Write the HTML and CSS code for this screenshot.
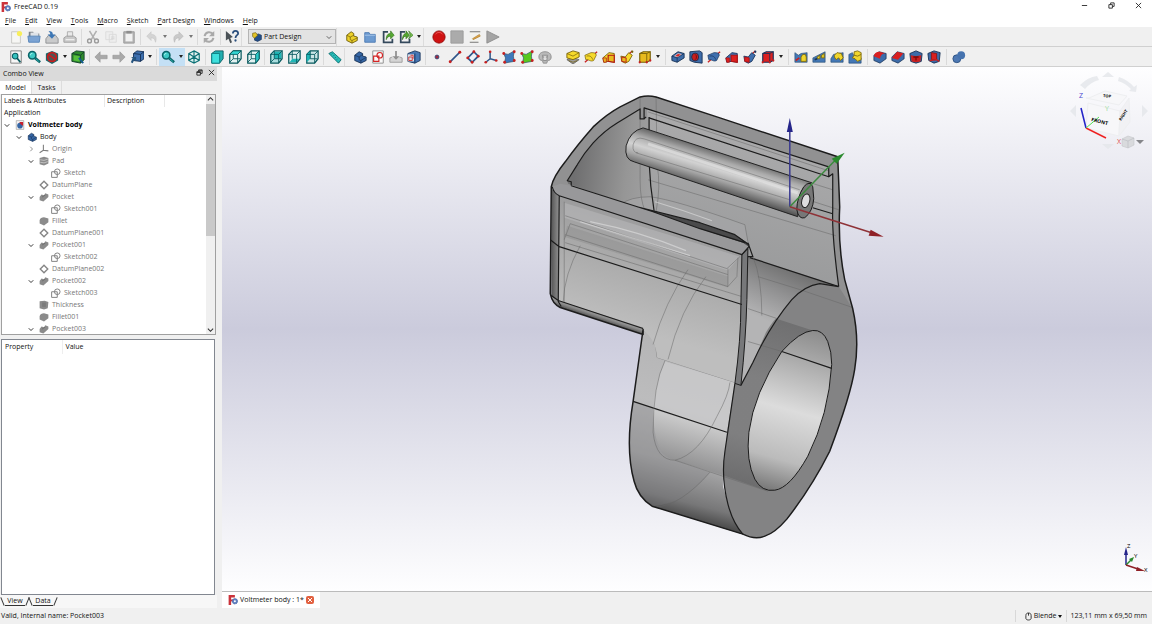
FILE: index.html
```html
<!DOCTYPE html>
<html lang="en">
<head>
  <meta charset="UTF-8" />
  <meta name="viewport" content="width=device-width, initial-scale=1.0"/>
  <title>FreeCAD 0.19</title>
  <link rel="stylesheet" href="styles.css">
</head>
<body>
  <!-- icon set -->
  <svg class="sprite" aria-hidden="true">
    <symbol id="logo" viewBox="0 0 16 16"><path d="M1 0h10v4H5v3h4v3H5v6H1z" fill="#cb333b"/><circle cx="11" cy="10" r="4.4" fill="#5f7fc0" stroke="#3a5696" stroke-dasharray="2 1"/><circle cx="11" cy="10" r="1.6" fill="#fff"/></symbol>
    <symbol id="new" viewBox="0 0 16 16"><path d="M3 2h8l2 3v10H3z" fill="#f6f6f4" stroke="#c4c4c0"/><circle cx="12" cy="4" r="3" fill="#f8ee5a"/></symbol>
    <symbol id="open" viewBox="0 0 16 16"><path d="M2 2h5l1 2h6v9H2z" fill="#7d8288"/><path d="M4 3h9v5H4z" fill="#dfe3e8"/><path d="M1 7h14l-1 7H2z" fill="#7ba3d3" stroke="#5583b8"/></symbol>
    <symbol id="save" viewBox="0 0 16 16"><path d="M1 10l3-4h8l3 4v5H1z" fill="#c9cacb" stroke="#8d8f91"/><path d="M4 1c3 0 5 1 5 4h3l-4 5-5-5h3c0-2-1-3-2-4z" fill="#3d77b5"/></symbol>
    <symbol id="print" viewBox="0 0 16 16"><path d="M5 2h6v6H5z" fill="#e9e9e9" stroke="#aaa"/><path d="M1 9l3-2h8l3 2v5H1z" fill="#c9c9c9" stroke="#9b9b9b"/><path d="M3 11h10" stroke="#eee" stroke-width="1.5"/></symbol>
    <symbol id="cut" viewBox="0 0 16 16"><path d="M4 1l6 10M12 1L6 11" stroke="#b0b0b0" stroke-width="1.8"/><g fill="none" stroke="#9b9b9b" stroke-width="1.6"><circle cx="4" cy="12.500" r="2.200"/><circle cx="12" cy="12.500" r="2.200"/></g></symbol>
    <symbol id="copy" viewBox="0 0 16 16"><path d="M2 2h8v9H2zM6 5h8v9H6z" fill="#eee" stroke="#dadada"/><path d="M8 8h4M8 10h4" stroke="#d3d3d3"/></symbol>
    <symbol id="paste" viewBox="0 0 16 16"><path d="M2 2h12v13H2z" fill="#b3b3b3" stroke="#999"/><path d="M4 4h8v9H4z" fill="#f1f1f1"/><path d="M5 1h6v3H5z" fill="#8e8e8e"/></symbol>
    <symbol id="undo" viewBox="0 0 16 16"><path d="M2 7l5-5v3c5 0 7 3 5 9-1-4-2-5-5-5v3z" fill="#d4d4d4" stroke="#c4c4c4" stroke-width=".6"/></symbol>
    <symbol id="redo" viewBox="0 0 16 16"><path d="M14 7L9 2v3C4 5 2 8 4 14c1-4 2-5 5-5v3z" fill="#c9c9c9" stroke="#b5b5b5" stroke-width=".6"/></symbol>
    <symbol id="refresh" viewBox="0 0 16 16"><path d="M3 7c1-5 7-6 10-2M13 9c-1 5-7 6-10 2" fill="none" stroke="#a9a9a9" stroke-width="2.4"/><path d="M14 1v6H8zM2 15V9h6z" fill="#a9a9a9"/></symbol>
    <symbol id="whats" viewBox="0 0 16 16"><path d="M1 1l8 7-3 1 2 5-2 1-2-5-3 2z" fill="#4b5257"/><path d="M9 4c0-4 6-4 6 0 0 2-3 2-3 5" fill="none" stroke="#2b4f7d" stroke-width="2"/><circle cx="12" cy="12" r="1.3" fill="#2b4f7d"/></symbol>
    <symbol id="wb" viewBox="0 0 16 16"><path d="M4 6l6-3 5 2v7l-6 3-5-2z" fill="#24508c" stroke="#152f52"/><path d="M1 2l5-1 3 4-5 5-3-3z" fill="#e3c52b" stroke="#6b5a08"/></symbol>
    <symbol id="part" viewBox="0 0 16 16"><path d="M2 6l5-4 3 2v3l4 1v4l-6 3-6-3z" fill="#edd12a" stroke="#6b5a08"/><path d="M2 6l4 2v3l2 1v3M6 8l4-2M8 12l6-3" fill="none" stroke="#6b5a08" stroke-width=".8"/></symbol>
    <symbol id="group" viewBox="0 0 16 16"><path d="M2 3h5l1 2h6v9H2z" fill="#6d9bd1" stroke="#4a78b0"/><path d="M2 6h12" stroke="#a9c8ea"/></symbol>
    <symbol id="link" viewBox="0 0 16 16"><path d="M8 2H3v12h10v-4" fill="none" stroke="#34495c" stroke-width="2"/><path d="M6 11c0-5 2-7 5-7V1l4 5-4 4V7c-2 0-4 1-5 4z" fill="#55a832" stroke="#2d6e16" stroke-width=".7"/></symbol>
    <symbol id="links" viewBox="0 0 16 16"><path d="M7 2H2v12h10v-4" fill="none" stroke="#34495c" stroke-width="2"/><path d="M4 11c0-5 2-7 4-7V1l4 5-4 4V7c-2 0-3 1-4 4z" fill="#55a832" stroke="#2d6e16" stroke-width=".7"/><path d="M11 1l5 5-5 4 2-4z" fill="#7cc452" stroke="#2d6e16" stroke-width=".7"/></symbol>
    <symbol id="rec" viewBox="0 0 16 16"><circle cx="8" cy="8" r="7" fill="#cf1212" stroke="#930b0b"/><path d="M4 5c2-3 6-3 8 0" stroke="#ec5c5c" fill="none"/></symbol>
    <symbol id="stop" viewBox="0 0 16 16"><path d="M1 1h14v14H1z" fill="#ababab" stroke="#9a9a9a"/></symbol>
    <symbol id="macro" viewBox="0 0 16 16"><path d="M2 2h12v12H2z" fill="#f2f2ee"/><path d="M2 2h12M2 14h10" stroke="#777" stroke-width="1.4"/><path d="M5 10l8-5 1 2-8 4z" fill="#dfa445" stroke="#9b6d1f" stroke-width=".6"/></symbol>
    <symbol id="play" viewBox="0 0 16 16"><path d="M1 1l14 7-14 7z" fill="#a5a5a5" stroke="#8d8d8d"/></symbol>

    <symbol id="fit" viewBox="0 0 16 16"><path d="M2 1h12v14H2z" fill="#f7f7f7" stroke="#777"/><circle cx="7" cy="7" r="3.200" fill="#35c1bd" stroke="#0b5d62" stroke-width="1.2"/><path d="M9 9l4 5" stroke="#0b5d62" stroke-width="2"/></symbol>
    <symbol id="mag" viewBox="0 0 16 16"><circle cx="6" cy="6" r="4.200" fill="#3ec9c4" stroke="#0b6468" stroke-width="1.8"/><path d="M4 6c0-2 1-2 2-2" stroke="#c3fbf6" fill="none"/><path d="M9 9l6 5" stroke="#0b6468" stroke-width="3"/><path d="M10 10l4 3.500" stroke="#2cb3b0"/></symbol>
    <symbol id="nosign" viewBox="0 0 16 16"><path d="M1 4l7-3 7 3v8l-7 4-7-4z" fill="#18686b"/><circle cx="8" cy="8" r="5" fill="#4b5556" stroke="#c41f1f" stroke-width="2"/><path d="M4 5l8 6" stroke="#c41f1f" stroke-width="2"/></symbol>
    <symbol id="bbox" viewBox="0 0 16 16"><path d="M1 4l5-3 9 1v9l-4 4-10-2z" fill="#2e8b2d" stroke="#123f2a"/><path d="M3 6l7 1v6l-7-1z" fill="#56bf3d"/><path d="M1 4l10 2 4-4M11 6v9" stroke="#123f2a" fill="none"/><path d="M9 9l5 6" stroke="#155d92" stroke-width="2"/></symbol>
    <symbol id="prev" viewBox="0 0 16 16"><path d="M1 8l6-6v4h8v4H7v4z" fill="#a9a9a9" stroke="#949494" stroke-width=".7"/></symbol>
    <symbol id="next" viewBox="0 0 16 16"><path d="M15 8L9 2v4H1v4h8v4z" fill="#a9a9a9" stroke="#949494" stroke-width=".7"/></symbol>
    <symbol id="goto" viewBox="0 0 16 16"><path d="M4 4l4-3 8 1v8l-4 3-8-1z" fill="#3d6fae" stroke="#142e52"/><path d="M4 4l8 1 4-3M12 5v8" fill="none" stroke="#142e52"/><path d="M1 14l2-5-2-1h6v5l-2-2-2 4z" fill="#25547e"/></symbol>
    <symbol id="iso" viewBox="0 0 16 16"><path d="M8 1l6 3v8l-6 3-6-3V4zM8 1v14M2 4l6 4 6-4M2 12l6-4 6 4" fill="#d9f2f1" stroke="#0c7075" stroke-width="1.3"/></symbol>
    <symbol id="vfront" viewBox="0 0 16 16"><path d="M2 4l4-3h9v9l-4 5H2z" fill="#21aeb0" stroke="#07595e"/><path d="M2 4h9v11H2z" fill="#3ee0dd" stroke="#0b7d80"/></symbol>
    <symbol id="vtop" viewBox="0 0 16 16"><path d="M2 5l4-4h9v9l-4 5H2z" fill="#e3f2f2" stroke="#07595e" stroke-width="1.4"/><path d="M2 5l4-4h9l-4 4z" fill="#35d8d6" stroke="#07595e"/><path d="M11 5v10M6 5v5l-4 4M6 10h8" stroke="#07595e" fill="none"/></symbol>
    <symbol id="vright" viewBox="0 0 16 16"><path d="M2 5l4-4h9v9l-4 5H2z" fill="#e3f2f2" stroke="#07595e" stroke-width="1.4"/><path d="M11 5l4-4v9l-4 5z" fill="#2cc7c6" stroke="#07595e"/><path d="M2 5h9M6 1v9l-4 4M6 10h5" stroke="#07595e" fill="none"/></symbol>
    <symbol id="vrear" viewBox="0 0 16 16"><path d="M2 5l4-4h9v9l-4 5H2z" fill="#aadedf" stroke="#07595e" stroke-width="1.4"/><path d="M6 2h8v8H6z" fill="#1fb6b6"/><path d="M2 5h9v10M11 5l4-4M6 1v9l-4 4M6 10h8" stroke="#07595e" fill="none"/></symbol>
    <symbol id="vbottom" viewBox="0 0 16 16"><path d="M2 5l4-4h9v9l-4 5H2z" fill="#e0eff0" stroke="#07595e" stroke-width="1.4"/><path d="M3 14l3-4h8l-3 4z" fill="#1fb6b6"/><path d="M2 5h9v10M11 5l4-4M6 1v9" stroke="#07595e" fill="none"/></symbol>
    <symbol id="vleft" viewBox="0 0 16 16"><path d="M2 5l4-4h9v9l-4 5H2z" fill="#cbe6e7" stroke="#07595e" stroke-width="1.4"/><path d="M2 5l4-4v9l-4 4z" fill="#1fb6b6"/><path d="M2 5h9v10M11 5l4-4M6 1v9h8" stroke="#07595e" fill="none"/></symbol>
    <symbol id="measure" viewBox="0 0 16 16"><path d="M1 4l4-2 10 9-3 4z" fill="#29bdb9" stroke="#0a6b6e"/><path d="M4 5l1-1M6 7l1-1M8 9l1-1M10 11l1-1" stroke="#0a6b6e"/></symbol>

    <symbol id="body" viewBox="0 0 16 16"><path d="M2 6l5-4 4 2v3l4 1v4l-6 3-7-3z" fill="#3566a5" stroke="#152f52"/><path d="M2 6l5 2v3l2 1v3M7 8l4-3M9 12l5-3" fill="none" stroke="#152f52" stroke-width=".8"/></symbol>
    <symbol id="sketchnew" viewBox="0 0 16 16"><path d="M2 1h12v14H2z" fill="#fafafa" stroke="#888"/><g fill="none" stroke="#d42525" stroke-width="1.3"><path d="M3 7h6v6H3z"/><circle cx="10" cy="6" r="3.200"/></g></symbol>
    <symbol id="import" viewBox="0 0 16 16"><path d="M1 9v5h14V9l-3-1M4 8L1 9" fill="#d5d5d5" stroke="#9a9a9a"/><path d="M7 1h2v6h3l-4 4-4-4h3z" fill="#8f8f8f"/></symbol>
    <symbol id="map" viewBox="0 0 16 16"><path d="M1 4l8-3 6 2v9l-6 3-8-2z" fill="#4677b4" stroke="#17345b"/><path d="M9 4v11" stroke="#17345b"/><path d="M1 5h7v8H1z" fill="#d8dde4"/><path d="M2 8h4v4H2zM4 6h3v4" fill="none" stroke="#d03030"/></symbol>
    <symbol id="point" viewBox="0 0 16 16"><circle cx="8" cy="8" r="2.200" fill="#a22a3f" stroke="#2b4c7c"/></symbol>
    <symbol id="line" viewBox="0 0 16 16"><path d="M3 13L13 3" stroke="#2f5589" stroke-width="1.8"/><circle cx="2.500" cy="13.500" r="1.700" fill="#c72121"/><circle cx="13.500" cy="2.500" r="1.700" fill="#c72121"/></symbol>
    <symbol id="plane" viewBox="0 0 16 16"><path d="M9 2l5 5-7 7-5-5z" fill="#eef2f7" stroke="#2f5589" stroke-width="2"/><g fill="#c72121"><circle cx="9" cy="2" r="1.600"/><circle cx="14" cy="7" r="1.600"/><circle cx="7" cy="14" r="1.600"/><circle cx="2" cy="9" r="1.600"/></g></symbol>
    <symbol id="csys" viewBox="0 0 16 16"><path d="M7 2v8l7 2M7 10l-5 4" fill="none" stroke="#2f5589" stroke-width="1.7"/><g fill="#c72121"><circle cx="7" cy="2" r="1.500"/><circle cx="14" cy="12" r="1.500"/><circle cx="2" cy="14" r="1.500"/></g></symbol>
    <symbol id="binder" viewBox="0 0 16 16"><path d="M2 4l5 1 7-4-1 6 1 6-6 1-5 1 1-6z" fill="currentColor" stroke="#31516b" stroke-width=".8"/><g fill="#c72121"><circle cx="2" cy="4" r="1.600"/><circle cx="14" cy="2" r="1.600"/><circle cx="14" cy="12" r="1.600"/><circle cx="3" cy="14" r="1.600"/></g></symbol>
    <symbol id="clone" viewBox="0 0 16 16"><path d="M1 8c0-4 3-6 7-6s7 2 7 6-3 4-4 4l-1 3H6l-1-3c-2 0-4-1-4-4z" fill="#b9b9b9" stroke="#8c8c8c"/><path d="M5 6h6l-1 6H6z" fill="#dedede" stroke="#888"/><path d="M6 8h1M9 8h1" stroke="#555"/></symbol>

    <symbol id="pad" viewBox="0 0 16 16"><path d="M1 11l7-2 7 2-7 5z" fill="#9d9d9d" stroke="#666"/><path d="M1 4l7-3 7 2v5l-7 3-7-2z" fill="var(--hi)" stroke="var(--edge)"/><path d="M1 4l7 3 7-4M3 12l5 2 5-2" fill="none" stroke="var(--edge)" stroke-width=".8"/></symbol>
    <symbol id="revolve" viewBox="0 0 16 16"><path d="M1 14L15 2" stroke="#c72121" stroke-width="1.5"/><path d="M1 6l7-3c3 0 6 0 6 3l-3 6c-4 2-6-2-9-1z" fill="var(--hi)" stroke="var(--edge)" stroke-width=".8"/><path d="M3 7c4-1 6 1 7 4" fill="none" stroke="var(--edge)" stroke-width=".8"/></symbol>
    <symbol id="loft" viewBox="0 0 16 16"><path d="M1 9l7-6 6 1v10l-7-1-5 1z" fill="var(--hi)" stroke="var(--edge)"/><path d="M7 6l7 0v8l-7-1z" fill="var(--lo)" stroke="#b31313" stroke-width="1.300"/><path d="M1 9h4v5H2z" fill="var(--lo)" stroke="#b31313" stroke-width=".8"/></symbol>
    <symbol id="pipe" viewBox="0 0 16 16"><path d="M9 6l5-5" stroke="#c72121" stroke-width="1.500"/><path d="M1 7l5 1 4-5 4 3-4 7-4 2-4-2z" fill="var(--hi)" stroke="var(--edge)"/><path d="M2 8l5 1v5l-5-1z" fill="var(--lo)" stroke="#b31313"/><circle cx="14" cy="2" r="1.300" fill="var(--edge)"/></symbol>
    <symbol id="prim" viewBox="0 0 16 16"><path d="M2 4l4-2h8v10l-4 2H2z" fill="var(--lo)" stroke="var(--edge)" stroke-width="1.300"/><path d="M2 4h8v10M10 4l4-2" stroke="var(--edge)" fill="none"/><g fill="#c72121"><circle cx="2" cy="14" r="1.300"/><circle cx="10" cy="14" r="1.300"/><circle cx="14" cy="12" r="1.300"/></g></symbol>
    <symbol id="pocket" viewBox="0 0 16 16"><path d="M1 7l7-5 7 2v5l-8 5-6-2z" fill="#3d6ca9" stroke="#152f52"/><path d="M4 7l4-3 4 1-4 3z" fill="#d12626" stroke="#efefef" stroke-width=".7"/><path d="M1 7l6 2 8-5M7 9v5" fill="none" stroke="#152f52" stroke-width=".8"/></symbol>
    <symbol id="hole" viewBox="0 0 16 16"><path d="M1 2l11-1 3 2v12l-9-1-5-2z" fill="#3d6ca9" stroke="#152f52"/><ellipse cx="7" cy="8" rx="4" ry="4.500" fill="#c91e1e" stroke="#152f52"/><path d="M7 5c2 1 2 5 0 6" fill="none" stroke="#6d0c0c"/></symbol>
    <symbol id="mirror" viewBox="0 0 16 16"><path d="M1 3l4 3 3-2 7-1v11H1z" fill="#4478b6" stroke="#24486f" stroke-width=".7"/><path d="M8 8l2-3h3l1 3v5H8z" fill="#f0d52d" stroke="#7d690d"/><path d="M2 12l4-3" stroke="#c72121" stroke-width="2"/></symbol>
    <symbol id="linear" viewBox="0 0 16 16"><path d="M1 9l6-3 8-4v12H1z" fill="#4478b6" stroke="#24486f" stroke-width=".7"/><path d="M6 8l3-2v4H6zM11 6l3-2v5h-3z" fill="#f0d52d" stroke="#7d690d"/><path d="M3 11l3-1" stroke="#1c3552" stroke-width="2"/></symbol>
    <symbol id="polar" viewBox="0 0 16 16"><path d="M1 10l3-5 11-2v11H1z" fill="#4478b6" stroke="#24486f" stroke-width=".7"/><path d="M5 6l3-3 5 1 2 5-3 3-2-3-3 2-2-3z" fill="#f0d52d" stroke="#7d690d"/></symbol>
    <symbol id="multi" viewBox="0 0 16 16"><path d="M1 5l4-2 3 6h7v6H1z" fill="#4478b6" stroke="#24486f" stroke-width=".7"/><path d="M7 2l4-1 4 2v8l-4 2-3-3-3-1 2-3z" fill="#f0d52d" stroke="#7d690d"/><path d="M7 6l4 1 4-2" fill="none" stroke="#7d690d"/></symbol>
    <symbol id="fillet" viewBox="0 0 16 16"><path d="M1 6l6-4 8 2v6l-7 5-7-3z" fill="#3d6ca9" stroke="#152f52" stroke-width=".8"/><path d="M1 7c1-4 3-5 7-5l6 2c-3 0-5 1-6 6z" fill="#d91f1f"/></symbol>
    <symbol id="chamfer" viewBox="0 0 16 16"><path d="M1 8l6-6 8 2v6l-7 5-7-3z" fill="#3d6ca9" stroke="#152f52" stroke-width=".8"/><path d="M1 9l6-7 7 2-6 7z" fill="#d91f1f"/></symbol>
    <symbol id="draft" viewBox="0 0 16 16"><path d="M1 4l7-3 7 3-1 9-6 2-6-2z" fill="#3d6ca9" stroke="#152f52"/><path d="M2 6l6 1 6-1-1 7-5 1-5-1z" fill="#c92020"/><path d="M5 8h6M8 8v4" stroke="#7a0b0b" stroke-width="1.500"/></symbol>
    <symbol id="thick" viewBox="0 0 16 16"><path d="M1 4l7-3 7 2-1 10-6 2-6-3z" fill="#3d6ca9" stroke="#152f52"/><path d="M5 3l6 1v7H5z" fill="#d91f1f" stroke="#8f1212"/><path d="M3 12l8-1 3 2" fill="none" stroke="#c92020" stroke-width="1.500"/></symbol>
    <symbol id="bool" viewBox="0 0 16 16"><circle cx="5.500" cy="10" r="4.500" fill="#4d78b3" stroke="#2b5080"/><circle cx="10.500" cy="6" r="4.500" fill="#4673af"/></symbol>

    <symbol id="doc" viewBox="0 0 16 16"><path d="M2 1h12v14H2z" fill="#f4f4f4" stroke="#999"/><circle cx="8" cy="9" r="4.500" fill="#3566a5"/><path d="M7 3h6v6c-2-1-5-2-6-6z" fill="#c9202f"/></symbol>
    <symbol id="t-origin" viewBox="0 0 16 16"><path d="M7 1v9l8 1M7 10l-6 4" fill="none" stroke="#7d7d7d" stroke-width="1.700"/></symbol>
    <symbol id="t-pad" viewBox="0 0 16 16"><path d="M1 3l7-2 7 2v9l-7 3-7-2z" fill="#8b8b8b"/><path d="M2 6l6 1 6-2M2 10l6 1 6-2" fill="none" stroke="#e1e1e1"/></symbol>
    <symbol id="t-sketch" viewBox="0 0 16 16"><g fill="none" stroke="#848484" stroke-width="1.600"><path d="M1 6h9v9H1z"/><circle cx="10" cy="6" r="4.500"/></g></symbol>
    <symbol id="t-plane" viewBox="0 0 16 16"><path d="M8 2l6 6-6 6-6-6z" fill="none" stroke="#858585" stroke-width="2.200"/></symbol>
    <symbol id="t-pocket" viewBox="0 0 16 16"><path d="M1 8l3-4 4 1 2-3 5 2v4l-8 7-6-2z" fill="#8b8b8b"/><path d="M5 8l5-3" stroke="#6c6c6c" stroke-width="1.500"/></symbol>
    <symbol id="t-fillet" viewBox="0 0 16 16"><path d="M1 7c0-3 4-5 7-5l7 2v6l-7 5-7-3z" fill="#8b8b8b"/></symbol>
    <symbol id="t-thick" viewBox="0 0 16 16"><path d="M1 2l8-1 6 2-1 10-6 2-7-2z" fill="#8b8b8b"/><path d="M5 4h6v7H5z" fill="#7c7c7c"/></symbol>
    <symbol id="chev" viewBox="0 0 8 8"><path d="M1 3l3 3 3-3" fill="none" stroke="currentColor" stroke-width="1.200"/></symbol>
  </svg>

  <div class="app">
    <header class="titlebar">
      <svg class="logo"><use href="#logo"/></svg>
      <h1>FreeCAD 0.19</h1>
      <div class="winbtns">
        <button aria-label="Minimize"><svg viewBox="0 0 8 8"><path d="M1 4h6"/></svg></button>
        <button aria-label="Restore"><svg viewBox="0 0 8 8"><path d="M1 3h4v4H1zM3 3V1h4v4H5"/></svg></button>
        <button aria-label="Close"><svg viewBox="0 0 8 8"><path d="M1 1l6 6M7 1L1 7"/></svg></button>
      </div>
    </header>

    <nav class="menubar">
      <button><u>F</u>ile</button>
      <button><u>E</u>dit</button>
      <button><u>V</u>iew</button>
      <button><u>T</u>ools</button>
      <button><u>M</u>acro</button>
      <button><u>S</u>ketch</button>
      <button><u>P</u>art Design</button>
      <button><u>W</u>indows</button>
      <button><u>H</u>elp</button>
    </nav>

    <div class="toolbar">
      <span class="grip"></span>
      <button aria-label="New"><svg><use href="#new"/></svg></button>
      <button aria-label="Open"><svg><use href="#open"/></svg></button>
      <button aria-label="Save"><svg><use href="#save"/></svg></button>
      <button aria-label="Print"><svg><use href="#print"/></svg></button>
      <span class="sep"></span>
      <button aria-label="Cut"><svg><use href="#cut"/></svg></button>
      <button aria-label="Copy"><svg><use href="#copy"/></svg></button>
      <button aria-label="Paste"><svg><use href="#paste"/></svg></button>
      <span class="sep"></span>
      <button aria-label="Undo"><svg><use href="#undo"/></svg></button>
      <button class="drop dim" aria-label="Undo list"></button>
      <button aria-label="Redo"><svg><use href="#redo"/></svg></button>
      <button class="drop dim" aria-label="Redo list"></button>
      <span class="sep"></span>
      <button aria-label="Refresh"><svg><use href="#refresh"/></svg></button>
      <span class="sep"></span>
      <button aria-label="What's this"><svg><use href="#whats"/></svg></button>
      <span class="grip"></span>
      <div class="workbench">
        <svg class="wb-icon"><use href="#wb"/></svg>
        <select aria-label="Workbench"><option>Part Design</option></select>
        <svg class="wb-arrow"><use href="#chev"/></svg>
      </div>
      <span class="grip"></span>
      <button aria-label="Create part"><svg><use href="#part"/></svg></button>
      <button aria-label="Create group"><svg><use href="#group"/></svg></button>
      <button aria-label="Make link"><svg><use href="#link"/></svg></button>
      <button aria-label="Make sub-link"><svg><use href="#links"/></svg></button>
      <button class="drop" aria-label="Link actions"></button>
      <span class="grip"></span>
      <button aria-label="Record macro"><svg><use href="#rec"/></svg></button>
      <button aria-label="Stop macro"><svg><use href="#stop"/></svg></button>
      <button aria-label="Macros"><svg><use href="#macro"/></svg></button>
      <button aria-label="Execute macro"><svg><use href="#play"/></svg></button>
    </div>

    <div class="toolbar">
      <span class="grip"></span>
      <button aria-label="Fit all"><svg><use href="#fit"/></svg></button>
      <button aria-label="Fit selection"><svg><use href="#mag"/></svg></button>
      <button aria-label="Draw style"><svg><use href="#nosign"/></svg></button>
      <button class="drop" aria-label="Draw styles"></button>
      <button aria-label="Bounding box"><svg><use href="#bbox"/></svg></button>
      <span class="sep"></span>
      <button aria-label="Back"><svg><use href="#prev"/></svg></button>
      <button aria-label="Forward"><svg><use href="#next"/></svg></button>
      <button aria-label="Go to linked object"><svg><use href="#goto"/></svg></button>
      <button class="drop" aria-label="Link navigation"></button>
      <span class="sep"></span>
      <span class="active">
        <button aria-label="Sync view"><svg><use href="#mag"/></svg></button>
        <button class="drop" aria-label="Sync views"></button>
      </span>
      <button aria-label="Isometric"><svg><use href="#iso"/></svg></button>
      <span class="sep"></span>
      <button aria-label="Front"><svg><use href="#vfront"/></svg></button>
      <button aria-label="Top"><svg><use href="#vtop"/></svg></button>
      <button aria-label="Right"><svg><use href="#vright"/></svg></button>
      <span class="sep"></span>
      <button aria-label="Rear"><svg><use href="#vrear"/></svg></button>
      <button aria-label="Bottom"><svg><use href="#vbottom"/></svg></button>
      <button aria-label="Left"><svg><use href="#vleft"/></svg></button>
      <span class="sep"></span>
      <button aria-label="Measure distance"><svg><use href="#measure"/></svg></button>
      <span class="grip"></span>
      <button aria-label="Create body"><svg><use href="#body"/></svg></button>
      <button aria-label="Create sketch"><svg><use href="#sketchnew"/></svg></button>
      <button aria-label="Edit sketch"><svg><use href="#import"/></svg></button>
      <button aria-label="Map sketch"><svg><use href="#map"/></svg></button>
      <span class="sep"></span>
      <button aria-label="Datum point"><svg><use href="#point"/></svg></button>
      <button aria-label="Datum line"><svg><use href="#line"/></svg></button>
      <button aria-label="Datum plane"><svg><use href="#plane"/></svg></button>
      <button aria-label="Local coordinate system"><svg><use href="#csys"/></svg></button>
      <button class="blue" aria-label="Shape binder"><svg><use href="#binder"/></svg></button>
      <button class="green" aria-label="Sub-shape binder"><svg><use href="#binder"/></svg></button>
      <button aria-label="Clone"><svg><use href="#clone"/></svg></button>
      <div class="modeling">
        <span class="grip"></span>
        <button class="add" aria-label="Pad"><svg><use href="#pad"/></svg></button>
        <button class="add" aria-label="Revolution"><svg><use href="#revolve"/></svg></button>
        <button class="add" aria-label="Additive loft"><svg><use href="#loft"/></svg></button>
        <button class="add" aria-label="Additive pipe"><svg><use href="#pipe"/></svg></button>
        <button class="add" aria-label="Additive primitive"><svg><use href="#prim"/></svg></button>
        <button class="drop" aria-label="Additive primitives"></button>
        <span class="sep"></span>
        <button aria-label="Pocket"><svg><use href="#pocket"/></svg></button>
        <button aria-label="Hole"><svg><use href="#hole"/></svg></button>
        <button class="sub" aria-label="Groove"><svg><use href="#revolve"/></svg></button>
        <button class="sub" aria-label="Subtractive loft"><svg><use href="#loft"/></svg></button>
        <button class="sub" aria-label="Subtractive pipe"><svg><use href="#pipe"/></svg></button>
        <button class="sub" aria-label="Subtractive primitive"><svg><use href="#prim"/></svg></button>
        <button class="drop" aria-label="Subtractive primitives"></button>
        <span class="sep"></span>
        <button aria-label="Mirrored"><svg><use href="#mirror"/></svg></button>
        <button aria-label="Linear pattern"><svg><use href="#linear"/></svg></button>
        <button aria-label="Polar pattern"><svg><use href="#polar"/></svg></button>
        <button aria-label="MultiTransform"><svg><use href="#multi"/></svg></button>
        <span class="sep"></span>
        <button aria-label="Fillet"><svg><use href="#fillet"/></svg></button>
        <button aria-label="Chamfer"><svg><use href="#chamfer"/></svg></button>
        <button aria-label="Draft"><svg><use href="#draft"/></svg></button>
        <button aria-label="Thickness"><svg><use href="#thick"/></svg></button>
        <span class="sep"></span>
        <button aria-label="Boolean"><svg><use href="#bool"/></svg></button>
      </div>
    </div>

    <main class="work">
      <aside class="dock">
        <div class="dock-title">
          <h2>Combo View</h2>
          <button aria-label="Float"><svg viewBox="0 0 8 8"><path d="M1 3h4v4H1zM3 3V1h4v4H5M1 4h4M3 2h4"/></svg></button>
          <button aria-label="Close panel"><svg viewBox="0 0 8 8"><path d="M1 1l6 6M7 1L1 7"/></svg></button>
        </div>
        <div class="tabs">
          <button class="tab on">Model</button>
          <button class="tab">Tasks</button>
        </div>

        <section class="tree">
          <div class="tree-main">
            <div class="tree-head"><span>Labels &amp; Attributes</span><span>Description</span></div>
            <div class="root">Application</div>
            <ul>
              <li><div class="row doc"><svg class="tw"><use href="#chev"/></svg><svg class="ic"><use href="#doc"/></svg>Voltmeter body</div>
                <ul>
                  <li><div class="row shown"><svg class="tw"><use href="#chev"/></svg><svg class="ic"><use href="#body"/></svg>Body</div>
                    <ul>
                      <li><div class="row"><svg class="tw shut"><use href="#chev"/></svg><svg class="ic"><use href="#t-origin"/></svg>Origin</div></li>
                      <li><div class="row"><svg class="tw"><use href="#chev"/></svg><svg class="ic"><use href="#t-pad"/></svg>Pad</div>
                        <ul><li><div class="row leaf"><svg class="ic"><use href="#t-sketch"/></svg>Sketch</div></li></ul></li>
                      <li><div class="row leaf"><svg class="ic"><use href="#t-plane"/></svg>DatumPlane</div></li>
                      <li><div class="row"><svg class="tw"><use href="#chev"/></svg><svg class="ic"><use href="#t-pocket"/></svg>Pocket</div>
                        <ul><li><div class="row leaf"><svg class="ic"><use href="#t-sketch"/></svg>Sketch001</div></li></ul></li>
                      <li><div class="row leaf"><svg class="ic"><use href="#t-fillet"/></svg>Fillet</div></li>
                      <li><div class="row leaf"><svg class="ic"><use href="#t-plane"/></svg>DatumPlane001</div></li>
                      <li><div class="row"><svg class="tw"><use href="#chev"/></svg><svg class="ic"><use href="#t-pocket"/></svg>Pocket001</div>
                        <ul><li><div class="row leaf"><svg class="ic"><use href="#t-sketch"/></svg>Sketch002</div></li></ul></li>
                      <li><div class="row leaf"><svg class="ic"><use href="#t-plane"/></svg>DatumPlane002</div></li>
                      <li><div class="row"><svg class="tw"><use href="#chev"/></svg><svg class="ic"><use href="#t-pocket"/></svg>Pocket002</div>
                        <ul><li><div class="row leaf"><svg class="ic"><use href="#t-sketch"/></svg>Sketch003</div></li></ul></li>
                      <li><div class="row leaf"><svg class="ic"><use href="#t-thick"/></svg>Thickness</div></li>
                      <li><div class="row leaf"><svg class="ic"><use href="#t-fillet"/></svg>Fillet001</div></li>
                      <li><div class="row"><svg class="tw"><use href="#chev"/></svg><svg class="ic"><use href="#t-pocket"/></svg>Pocket003</div></li>
                    </ul>
                  </li>
                </ul>
              </li>
            </ul>
          </div>
          <div class="scroll">
            <svg class="up"><use href="#chev"/></svg>
            <div class="track"><div class="thumb"></div></div>
            <svg><use href="#chev"/></svg>
          </div>
        </section>

        <section class="props">
          <table>
            <thead><tr><th>Property</th><th>Value</th></tr></thead>
          </table>
        </section>
        <div class="foot-tabs">
          <button>View</button>
          <button class="on">Data</button>
        </div>
      </aside>

      <section class="mdi">
        <div class="view">
          <svg class="model" viewBox="222 67 930 525">
            <defs>
              <linearGradient id="inner" gradientUnits="userSpaceOnUse" x1="575" y1="170" x2="660" y2="180"><stop offset="0" stop-color="#6f6f70"/><stop offset=".6" stop-color="#969696"/><stop offset="1" stop-color="#a4a4a5"/></linearGradient>
              <linearGradient id="back" gradientUnits="userSpaceOnUse" x1="740" y1="140" x2="710" y2="270"><stop offset="0" stop-color="#a9a9aa"/><stop offset="1" stop-color="#999a9b"/></linearGradient>
              <linearGradient id="rod" gradientUnits="userSpaceOnUse" x1="714" y1="151" x2="703" y2="187"><stop offset="0" stop-color="#6e6e6e"/><stop offset=".2" stop-color="#aaa"/><stop offset=".45" stop-color="#d2d2d2"/><stop offset=".7" stop-color="#a6a6a6"/><stop offset="1" stop-color="#555"/></linearGradient>
              <linearGradient id="front" gradientUnits="userSpaceOnUse" x1="660" y1="225" x2="630" y2="330"><stop offset="0" stop-color="#9c9c9d"/><stop offset=".35" stop-color="#a8a8a8"/><stop offset="1" stop-color="#bebebe"/></linearGradient>
              <linearGradient id="tube" gradientUnits="userSpaceOnUse" x1="705" y1="340" x2="660" y2="515"><stop offset="0" stop-color="#b4b4b5"/><stop offset=".4" stop-color="#bcbcbd"/><stop offset=".7" stop-color="#a5a5a6"/><stop offset=".9" stop-color="#777778"/><stop offset="1" stop-color="#444"/></linearGradient>
              <linearGradient id="bore" gradientUnits="userSpaceOnUse" x1="815" y1="331" x2="770" y2="492"><stop offset="0" stop-color="#8c8c8c"/><stop offset=".18" stop-color="#a8a8a8"/><stop offset=".5" stop-color="#dcdcdc"/><stop offset=".8" stop-color="#bbb"/><stop offset="1" stop-color="#777"/></linearGradient>
              <linearGradient id="neck" gradientUnits="userSpaceOnUse" x1="800" y1="270" x2="775" y2="325"><stop offset="0" stop-color="#6d6d6d"/><stop offset=".5" stop-color="#929293"/><stop offset="1" stop-color="#b4b4b5"/></linearGradient>
              <linearGradient id="side" gradientUnits="userSpaceOnUse" x1="551" y1="0" x2="560" y2="0"><stop offset="0" stop-color="#555"/><stop offset="1" stop-color="#9a9a9a"/></linearGradient>
              <linearGradient id="low" gradientUnits="userSpaceOnUse" x1="700" y1="425" x2="687" y2="470"><stop offset="0" stop-color="#cfcfcf"/><stop offset="1" stop-color="#858586"/></linearGradient>
              <linearGradient id="shade" gradientUnits="userSpaceOnUse" x1="790" y1="325" x2="750" y2="490"><stop offset="0" stop-color="#666667"/><stop offset=".35" stop-color="#7d7d7e"/><stop offset=".7" stop-color="#7d7d7e"/><stop offset="1" stop-color="#5e5e5f"/></linearGradient>
              <linearGradient id="lip" gradientUnits="userSpaceOnUse" x1="603" y1="313" x2="600" y2="322"><stop offset="0" stop-color="#aaa"/><stop offset=".5" stop-color="#8a8a8a"/><stop offset="1" stop-color="#444"/></linearGradient>
            </defs>

            <!-- rear wall and interior -->
            <path fill="#919192" d="M551 187Q553 177 565 162Q577 145 593 127Q607 114 620 107L640 97Q648 95 656 97L720 118L838 157L840 207Q838 245 845 280L853 309L839 290L700 300L559 196z"/>
            <path fill="url(#back)" d="M647 109L829 167V177L833 174V210L834 243L839 287L748 256L650 212z"/>
            <path fill="url(#inner)" d="M568 184L567 181L577 165Q584 153 593 143L617 123L640 109V119L650 117L649 180L653 211L636 207z"/>
            <path fill="#a5a5a6" opacity=".7" d="M620 205Q630 197 650 197Q675 200 745 225L748 243L700 224L637 207z"/>
            <g class="ghost">
              <path d="M640 97V180Q640 200 645 211M656 97L657 165Q661 186 656 212M648 112L829 171M648 132L833 190M620 205Q630 197 650 197Q675 200 745 225L748 242M648 180L836 236"/>
              <path d="M811 201L839 210"/>
            </g>
            <path class="pale" d="M655 202Q685 211 712 221"/>
            <path class="hard" d="M649 117V135M649 162Q650 187 654 211"/>
            <path class="hard" d="M571 186V182L567 181L577 165Q584 153 593 143Q604 131 617 123L640 109V119H644V108L829 167V177L649 118M829 177L833 174V210Q832 235 839 287M644 119L646 117"/>

            <!-- pivot rod -->
            <path fill="url(#rod)" stroke="#222" d="M643 128L812 183Q803 185 800 196Q797 206 798 217L634 162Q624 160 626 146Q630 131 643 128z"/>
            <path class="ghost" d="M644 139L800 190M636 153L790 200M644 139Q635 136 633 145Q632 153 638 153"/>
            <path class="pale wide" d="M648 144L798 193"/>
            <path fill="#777" class="face" d="M813 187Q810 180 804 187Q797 198 797 210Q799 220 805 218Q813 212 814 199z"/>
            <ellipse cx="806" cy="201" rx="4" ry="7" fill="#dcdcde" stroke="#222" transform="rotate(14 806 201)"/>
            <path class="hard" d="M813 208L833 214"/>

            <!-- neck between wall and ring -->
            <path fill="url(#neck)" d="M748 257L839 287L820 284Q805 287 792 300Q770 326 753 363L741 386L747 300z"/>
            <path class="hard" d="M750 258L839 287"/>
            <path class="ghost" d="M753 257Q762 278 762 316M758 277L800 290M748 309L780 320"/>

            <!-- tube, outer body -->
            <path fill="url(#tube)" d="M643 330L740 300L747 310L741 386L727 433L723 460V487L732 517L745 536L652 507Q638 498 634 482Q625 450 633 402z"/>
            <path fill="#d1d1d2" opacity=".6" d="M665 362L735 383L727 433L653 410Q656 382 665 362z"/>
            <path fill="url(#low)" opacity=".75" d="M653 410L727 433L723 476L675 461Q653 458 653 410z"/>
            <path fill="#7f7f80" opacity=".3" d="M633 402L653 409Q653 458 675 461L710 473Q685 505 652 507Q638 498 634 482Q625 450 633 402z"/>

            <!-- ring face -->
            <path fill="#838384" d="M839 287L853 309Q860 340 855 370Q851 396 830 452Q812 488 787 520Q775 534 765 537Q755 541 743 535Q733 524 728 505Q721 478 725 452L735 384L741 386L753 363Q770 326 792 300Q805 286 820 284z"/>
            <path fill="url(#shade)" opacity=".65" d="M766 333Q772 323 776 319L813 331Q798 334 782 352L757 403L748 450L757 483L768 492L723 476L727 433L735 385L741 386L753 363z"/>
            <path class="ghost" d="M748 342L782 352M800 290L853 308"/>
            <path fill="url(#bore)" class="face" d="M813 331Q823 330 828 342Q832 352 832 365Q829 415 808 457Q790 489 775 491Q762 493 755 480Q746 462 749 433Q754 394 782 352Q800 332 813 331z"/>
            <path class="hard" d="M782 352L832 369M633 402L727 433"/>
            <path class="ghost" d="M643 331Q656 334 657 358L735 383M665 361Q653 385 653 433Q656 461 675 461Q699 455 717 417Q729 395 730 383M675 461L768 492M655 508Q680 507 710 473"/>
            <path class="hard" d="M839 287L820 284Q805 286 792 300Q770 326 753 363L741 386M735 384L725 452Q721 478 728 505Q733 524 743 535"/>

            <!-- front wall -->
            <path fill="url(#front)" d="M559 196L742 255L741 306Q740 350 735 383L657 358Q656 340 643 331L558 303z"/>
            <path fill="#98989a" d="M571 186L653 212L745 244L749 247L742 255L559 196Q553 193 552 187L560 184z"/>
            <path fill="#4a4a4b" d="M637 207L700 223L735 235L749 244V247L743 243L700 229L653 212z"/>
            <path fill="url(#side)" d="M551 187Q553 193 559 196L558 305L551 297z"/>
            <path fill="#bfbfc0" opacity=".45" d="M564 203L740 257L728 271L564 218z"/>
            <path fill="#8f8f90" opacity=".5" d="M567 226L728 277V288L564 237z"/>
            <g class="ghost">
              <path d="M564 202L564 303M565 216L727 269L740 257M570 224L728 275M565 235L728 287V269M565 243L742 297M570 224L564 240M738 258L737 277L728 287M563 302Q564 275 580 246M653 345Q665 302 688 270M668 360Q680 310 706 277"/>
            </g>
            <path class="pale" d="M590 222Q640 232 686 251M580 222L690 256"/>
            <path fill="url(#lip)" d="M551 297L558 301L643 328V335L560 308L553 303z"/>
            <path fill="#77787a" class="face" d="M742 255L748 249L747 300Q746 340 741 386L735 384Q741 340 741 305z"/>
            <g class="hard">
              <path d="M552 187Q553 193 559 196L742 255L749 247V245L735 235L700 223L637 207M571 186L653 212L700 229L745 243M748 243L753 257H748M559 196L558 302L561 307M550 240L559 247L742 305M551 296L558 301L643 329"/>
              <path class="edge" d="M551 187Q553 177 565 162Q577 145 593 127Q607 114 620 107L640 97Q648 95 656 97L720 118L838 157L840 207Q838 245 845 280L853 309Q860 340 855 370Q851 396 830 452Q812 488 787 520Q775 534 765 537Q755 541 743 535L652 507Q638 498 634 482Q625 450 633 402L643 330V335L560 308Q552 304 550 294z"/>
            </g>

            <!-- placement axes -->
            <path d="M790 207V130" stroke="#3a3a8f" stroke-width="1.5"/><path d="M790 118l3 14h-6z" fill="#25258a"/>
            <path d="M790 207L836 160" stroke="#3c8a3f" stroke-width="1.5"/><path d="M845 153l-8 11-5-5z" fill="#2a8a2e"/>
            <path d="M790 207L872 233" stroke="#8f3237" stroke-width="1.5"/><path d="M884 237l-15-1 2-6z" fill="#8f2026"/>
          </svg>

          <svg class="navcube" viewBox="1070 70 80 80">
            <g fill="#e4e6ea" opacity=".8">
              <path d="M1108 72l6 5h-12zM1070 111l6-6v12zM1148 111l-6-6v12zM1108 149l-6-5h12zM1080 85q8-8 17-9l2 4q-8 2-14 9zM1119 77q9 3 15 10l3-2-1 7-7-1 2-2q-6-6-13-8z"/>
            </g>
            <path d="M1089 98l16-7 22 5-8 9-33-7zM1088 103l32 8-1 25-33-8z" fill="#f7f7f9" stroke="#eeeff1"/>
            <path d="M1120 111l9-13 1 24-11 14z" fill="#f1f1f4" stroke="#eeeff1"/>
            <path d="M1086 128l-5-20" stroke="#2424c8" stroke-width="1.500"/>
            <path d="M1086 128l20 10" stroke="#ee2222" stroke-width="1.500"/>
            <path d="M1086 128l13-11" stroke="#55e055"/>
            <text x="1079" y="98" fill="#4a4ad0">Z</text>
            <text x="1105" y="111" fill="#9bdc9b">Y</text>
            <text x="1117" y="144" fill="#e05050">X</text>
            <text class="side" x="1091" y="121" transform="rotate(14 1091 121)">FRONT</text>
            <text class="side top" x="1103" y="97" transform="rotate(5 1103 97)">TOP</text>
            <text class="side top" x="1121" y="121" transform="rotate(-56 1121 121)">RIGHT</text>
            <path d="M1122 139l6-3 6 2v7l-6 3-6-2z" fill="#d9dadd" stroke="#c5c6ca" stroke-width=".6"/><path d="M1122 139l6 2 6-3M1128 141v7" fill="none" stroke="#b9bac0" stroke-width=".6"/>
            <path d="M1136 140h8l-4 4z" fill="#85868a"/>
          </svg>

          <svg class="corner" viewBox="1120 542 32 34">
            <path d="M1126 566v-10" stroke="#25258a" stroke-width="1.500"/><path d="M1126 548l2 8h-4z" fill="#25258a"/>
            <path d="M1126 566l5-5" stroke="#2a8a2e" stroke-width="1.500"/><path d="M1134 558l-2 5-3-3z" fill="#2a8a2e"/>
            <path d="M1126 566l12 4" stroke="#8f2026" stroke-width="1.500"/><path d="M1145 572l-9 0 1-4z" fill="#8f2026"/>
            <text x="1127" y="549">Z</text><text x="1134" y="559">Y</text><text x="1144" y="573">X</text>
          </svg>
        </div>
        <div class="mdi-tabs">
          <div class="mdi-tab">
            <svg class="logo"><use href="#logo"/></svg>
            <span>Voltmeter body : 1*</span>
            <button aria-label="Close document"><svg viewBox="0 0 8 8"><path d="M2 2l4 4M6 2L2 6"/></svg></button>
          </div>
        </div>
      </section>
    </main>

    <footer class="status">
      <span>Valid, Internal name: Pocket003</span>
      <div class="status-right">
        <button class="navstyle"><svg viewBox="0 0 8 10"><path d="M4 1c2 0 3 1 3 3v3c0 1-1 2-3 2S1 8 1 7V4c0-2 1-3 3-3zM4 1v3"/></svg>Blende<i></i></button>
        <span class="dims">123,11 mm x 69,50 mm</span>
      </div>
    </footer>
  </div>
</body>
</html>
```
FILE: styles.css
```css
* {
  box-sizing: border-box;
}
body {
  margin: 0;
  font-family: "Open Sans", "Noto Sans", sans-serif;
  font-size: 7px;
  line-height: 12px;
  color: #111;
  background: #f0f0f0;
}
button {
  font: inherit;
  color: inherit;
  padding: 0;
  border: none;
  background: none;
}
h1, h2 {
  margin: 0;
  font-size: 7px;
  font-weight: normal;
}
ul {
  list-style: none;
  margin: 0;
  padding: 0;
}
.sprite {
  display: none;
}
.app {
  display: flex;
  flex-direction: column;
  height: 100vh;
  overflow: hidden;
}
.logo {
  width: 10px;
  height: 10px;
}

/* title and menu */
.titlebar {
  display: flex;
  align-items: center;
  gap: 3px;
  height: 14px;
  padding-left: 1px;
  background: #fff;
}
.winbtns {
  display: flex;
  margin-left: auto;
}
.winbtns button {
  width: 27px;
  height: 14px;
}
.winbtns svg, .dock-title svg {
  width: 7px;
  height: 7px;
  fill: none;
  stroke: #222;
}
.menubar {
  display: flex;
  gap: 9px;
  height: 13px;
  padding-left: 5px;
  background: #fff;
}

/* toolbars */
.toolbar {
  display: flex;
  align-items: center;
  height: 20px;
  border-bottom: 1px solid #d0d0d0;
}
.toolbar button {
  display: flex;
  align-items: center;
  justify-content: center;
  width: 18px;
  height: 18px;
}
.toolbar button svg {
  width: 14px;
  height: 14px;
}
.toolbar .drop {
  width: 8px;
}
.drop::after {
  content: "";
  border: 2px solid transparent;
  border-top: 3px solid #222;
  border-bottom: 0;
}
.dim::after {
  border-top-color: #777;
}
.grip {
  width: 7px;
  height: 18px;
  border-left: 1px solid #dcdcdc;
  background: radial-gradient(#bbb 30%, transparent 40%) 3px 0 / 2px 2px repeat-y;
}
.grip:first-child {
  border: none;
}
.sep {
  width: 1px;
  height: 16px;
  margin: 0 2px;
  background: #dadada;
}
.active, .modeling {
  display: flex;
  align-items: center;
}
.active {
  background: #c4e0f5;
}
.modeling {
  margin-left: 3px;
}
.modeling .sep {
  margin: 0 3px;
}
.blue { color: #3f78bb; }
.green { color: #5ac81e; }
.add {
  --hi: #f6d92b;
  --lo: #e8ba1e;
  --edge: #76600a;
}
.sub {
  --hi: #3f6fae;
  --lo: #dc2020;
  --edge: #17345b;
}
.workbench {
  display: flex;
  align-items: center;
  width: 88px;
  height: 15px;
  padding: 0 3px;
  gap: 2px;
  border: 1px solid #b4b4b4;
  background: #e3e3e3;
}
.workbench select {
  flex: 1;
  min-width: 0;
  appearance: none;
  padding: 0;
  border: none;
  background: none;
  font: inherit;
  color: inherit;
}
.wb-icon {
  width: 10px;
  height: 10px;
}
.wb-arrow {
  width: 6px;
  height: 6px;
  color: #555;
}

/* left dock */
.work {
  flex: 1;
  display: flex;
  min-height: 0;
}
.dock {
  display: flex;
  flex-direction: column;
  width: 217px;
  margin-right: 5px;
}
.dock-title {
  display: flex;
  align-items: center;
  height: 14px;
  padding: 0 0 0 3px;
  background: #dadada;
}
.dock-title h2 {
  flex: 1;
}
.dock-title button {
  width: 12px;
  height: 12px;
}
.tabs {
  display: flex;
  height: 13px;
}
.tab {
  width: 30px;
  border-right: 1px solid #ddd;
}
.tab.on {
  width: 32px;
  background: #fff;
}
.tree {
  flex: 240;
  display: flex;
  min-height: 0;
  margin: 0 1px;
  border: 1px solid #a0a0a0;
  background: #fff;
}
.tree-main {
  flex: 1;
  overflow: hidden;
}
.tree-head {
  display: flex;
  padding-left: 2px;
}
.tree-head span {
  width: 58px;
  border-right: 1px solid #e8e8e8;
}
.tree-head span:first-child {
  width: 101px;
  margin-right: 2px;
}
.root {
  padding-left: 2px;
}
li ul {
  padding-left: 12px;
}
.row {
  display: flex;
  align-items: center;
  height: 12px;
  color: #777;
}
.tw {
  width: 6px;
  height: 6px;
  margin: 0 5px 0 2px;
  color: #222;
}
.tw.shut {
  transform: rotate(-90deg);
  color: #888;
}
.ic {
  width: 10px;
  height: 10px;
  margin-right: 3px;
}
.leaf {
  padding-left: 13px;
}
.doc {
  color: #000;
  font-weight: bold;
}
.shown {
  color: #111;
}
.scroll {
  display: flex;
  flex-direction: column;
  align-items: center;
  width: 9px;
  background: #f0f0f0;
}
.scroll svg {
  width: 7px;
  height: 7px;
  margin: 1px 0;
  color: #333;
}
.scroll .up {
  transform: rotate(180deg);
}
.track {
  flex: 1;
  width: 100%;
}
.thumb {
  height: 60%;
  background: #c9c9c9;
}
.props {
  flex: 256;
  margin: 4px 2px 0 1px;
  border: 1px solid #828790;
  background: #fff;
}
.props table {
  border-collapse: collapse;
}
.props th {
  width: 60px;
  padding: 1px 3px;
  font-weight: normal;
  text-align: left;
  border-right: 1px solid #eee;
}
.props th:last-child {
  border: none;
}
.foot-tabs {
  display: flex;
  height: 13px;
  padding: 1px 0 0 5px;
  gap: 8px;
  background: #f7f7f7;
}
.foot-tabs button {
  position: relative;
  width: 20px;
  height: 10px;
  line-height: 10px;
  border-bottom: 1px solid #333;
}
.foot-tabs button::before,
.foot-tabs button::after {
  content: "";
  position: absolute;
  top: 1px;
  left: -3px;
  height: 9px;
  border-left: 1px solid #333;
  transform: rotate(-22deg);
}
.foot-tabs button::after {
  left: auto;
  right: -3px;
  transform: rotate(22deg);
}

/* 3D view */
.mdi {
  flex: 1;
  display: flex;
  flex-direction: column;
  min-width: 0;
}
.view {
  position: relative;
  flex: 1;
  min-height: 0;
  border-bottom: 1px solid #bbb;
  background: linear-gradient(#fefeff, #cbcbdc 50%, #fefeff);
}
.model {
  display: block;
  width: 100%;
  height: 100%;
}
.hard, .ghost, .pale {
  fill: none;
  stroke: #1c1c1c;
  stroke-width: 1.2;
  stroke-linejoin: round;
}
.edge {
  stroke-width: 1.5;
}
.ghost {
  stroke: #666;
  stroke-width: 1;
  opacity: .5;
}
.pale {
  stroke: #ececec;
  opacity: .5;
}
.wide {
  stroke-width: 3;
}
.face {
  stroke: #1c1c1c;
}
.navcube {
  position: absolute;
  top: 3px;
  right: 2px;
  width: 80px;
  height: 80px;
  font-size: 7px;
}
.navcube .side {
  font-weight: bold;
  font-size: 5px;
}
.navcube .top {
  font-size: 4px;
}
.corner {
  position: absolute;
  right: 0;
  bottom: 16px;
  width: 32px;
  height: 34px;
  font-size: 6px;
}
.mdi-tabs {
  display: flex;
  height: 16px;
}
.mdi-tab {
  display: flex;
  align-items: center;
  gap: 2px;
  padding: 0 6px;
  background: #fff;
}
.mdi-tab button {
  width: 8px;
  height: 8px;
  border-radius: 2px;
  background: #e2603f;
}
.mdi-tab button svg {
  display: block;
  width: 8px;
  height: 8px;
  stroke: #fff;
}

/* status bar */
.status {
  display: flex;
  align-items: center;
  justify-content: space-between;
  height: 16px;
  padding: 0 5px 0 1px;
}
.status-right {
  display: flex;
}
.navstyle {
  display: flex;
  align-items: center;
  gap: 2px;
  padding: 0 4px 0 9px;
  border-left: 1px solid #d8d8d8;
  border-right: 1px solid #d8d8d8;
}
.navstyle svg {
  width: 7px;
  height: 9px;
  fill: none;
  stroke: #222;
}
.navstyle i {
  border: 2px solid transparent;
  border-top: 3px solid #111;
  border-bottom: 0;
}
.dims {
  padding-left: 3px;
}
```
